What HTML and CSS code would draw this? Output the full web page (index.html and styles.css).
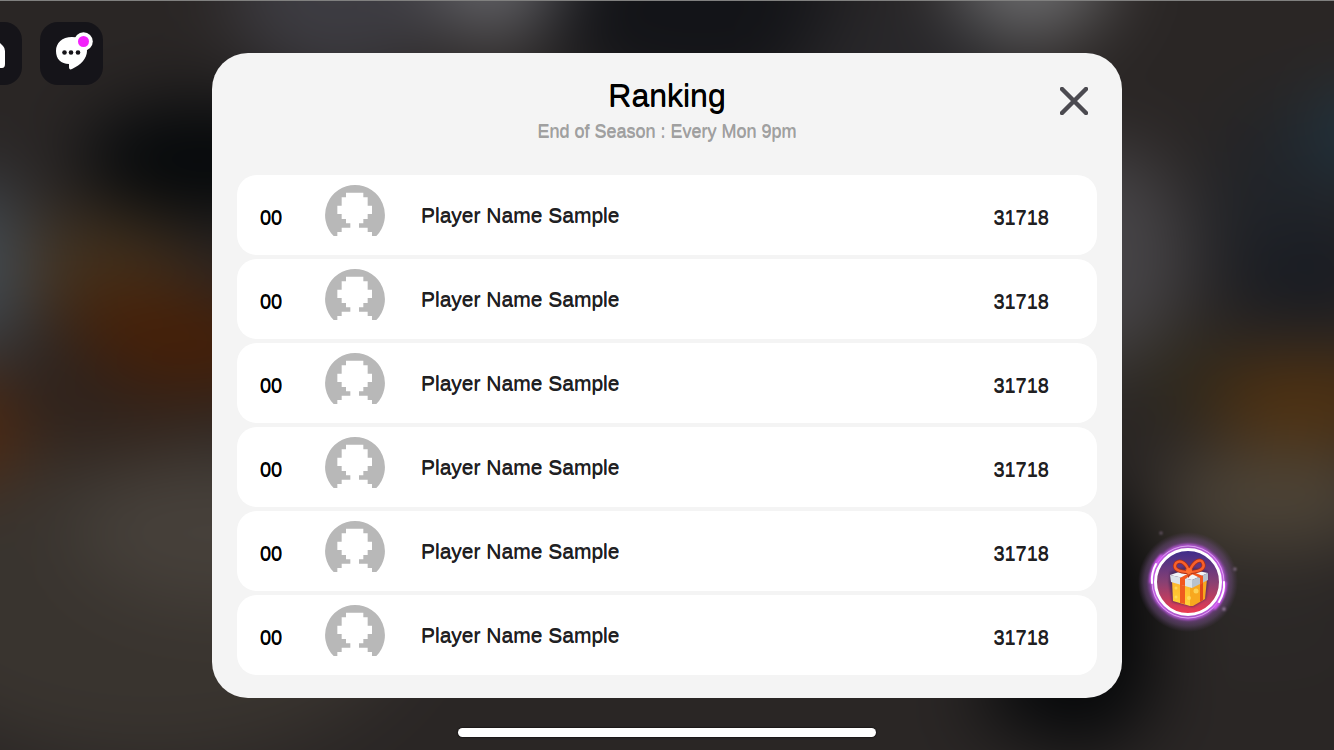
FILE: index.html
```html
<!DOCTYPE html>
<html lang="en">
<head>
<meta charset="utf-8">
<meta name="viewport" content="width=device-width, initial-scale=1">
<title>Ranking</title>
<link rel="stylesheet" href="styles.css">
</head>
<body>
<svg width="0" height="0" class="sprite" aria-hidden="true">
  <symbol id="avatar" viewBox="0 0 180 180">
    <path fill="#b8b8b8" d="M90 0a90 90 0 0 1 64 153h-13v-12h-13v-13h-26v-13h13v-13h13v-15h13V62h-13V37h-13V23H63v14H50v25H37v25h13v15h13v13h13v13H50v13H37v12H26A90 90 0 0 1 90 0z"/>
  </symbol>
</svg>
<div class="stage">
  <svg class="backdrop" viewBox="0 0 1334 750" preserveAspectRatio="none" aria-hidden="true">
    <filter id="blur" color-interpolation-filters="sRGB" filterUnits="userSpaceOnUse" x="-150" y="-150" width="1634" height="1050"><feGaussianBlur stdDeviation="36"/></filter>
    <g filter="url(#blur)">
      <rect x="-150" y="-150" width="1634" height="1050" fill="#2a2625"/>
      <ellipse cx="150" cy="600" rx="270" ry="160" fill="#39342f"/>
      <ellipse cx="225" cy="530" rx="150" ry="75" fill="#46403a"/>
      <ellipse cx="200" cy="160" rx="120" ry="60" fill="#06090b"/>
      <ellipse cx="90" cy="265" rx="100" ry="50" fill="#43321e"/>
      <ellipse cx="180" cy="338" rx="120" ry="48" fill="#471f06" transform="rotate(10 180 338)"/>
      <ellipse cx="90" cy="420" rx="130" ry="32" fill="#302119"/>
      <ellipse cx="-30" cy="265" rx="60" ry="90" fill="#424a52"/>
      <ellipse cx="-30" cy="430" rx="50" ry="60" fill="#522a10"/>
      <ellipse cx="340" cy="-10" rx="110" ry="90" fill="#3d3c42"/>
      <ellipse cx="495" cy="-40" rx="65" ry="80" fill="#646469"/>
      <ellipse cx="700" cy="10" rx="150" ry="90" fill="#131418"/>
      <ellipse cx="910" cy="50" rx="110" ry="60" fill="#28272a"/>
      <ellipse cx="1030" cy="-40" rx="80" ry="80" fill="#6c6c6e"/>
      <ellipse cx="1105" cy="255" rx="80" ry="110" fill="#464447"/>
      <ellipse cx="1290" cy="210" rx="80" ry="110" fill="#212429"/>
      <ellipse cx="1310" cy="280" rx="80" ry="45" fill="#181b22"/>
      <ellipse cx="1370" cy="130" rx="65" ry="40" fill="#203643"/>
      <ellipse cx="1190" cy="375" rx="60" ry="35" fill="#2d281a"/>
      <ellipse cx="1310" cy="400" rx="105" ry="46" fill="#50310f"/>
      <ellipse cx="1275" cy="498" rx="115" ry="50" fill="#4e4538"/>
      <ellipse cx="1260" cy="620" rx="100" ry="40" fill="#2c2927"/>
      <ellipse cx="1085" cy="620" rx="70" ry="130" fill="#050607"/>
      <ellipse cx="1065" cy="695" rx="90" ry="40" fill="#06080a"/>
    </g>
  </svg>

  <nav class="tools" aria-label="Game menu">
    <button class="tool" type="button" aria-label="Home">
      <svg viewBox="0 0 63 63" aria-hidden="true"><path fill="#fff" d="M31 11 44 24q2 2 2 5v13q0 4-3 4H18q-3 0-3-4V29q0-3 2-5z"/></svg>
    </button>
    <button class="tool" type="button" aria-label="Chat, new messages">
      <svg viewBox="0 0 63 63" aria-hidden="true">
        <path fill="#fff" d="M32 15C22 15 16 21 16 29c0 8 5 13 13 13l0 3c0 2 1 3 3 2 9-4 15-11 15-18 0-8-6-14-15-14z"/>
        <g fill="#151419"><circle cx="24.500" cy="30.500" r="2.300"/><circle cx="31" cy="30.500" r="2.300"/><circle cx="38" cy="30.500" r="2.300"/></g>
        <circle cx="43.500" cy="19.500" r="9.300" fill="#fff"/><circle cx="43.500" cy="19.500" r="5.500" fill="#f322fb"/>
      </svg>
    </button>
  </nav>

  <main class="panel" role="dialog" aria-labelledby="title">
    <header class="head">
      <h1 id="title" class="title">Ranking</h1>
      <p class="subtitle">End of Season : Every Mon 9pm</p>
      <button class="close" type="button" aria-label="Close">
        <svg viewBox="0 0 28 28" aria-hidden="true"><path d="M2 2 26 26M26 2 2 26" stroke="#4b4a50" stroke-width="4.500" stroke-linecap="round"/></svg>
      </button>
    </header>
    <ol class="list">
      <li class="row"><span class="num rank">00</span><svg class="avatar" aria-hidden="true"><use href="#avatar"/></svg><span class="name">Player Name Sample</span><span class="num score">31718</span></li>
      <li class="row"><span class="num rank">00</span><svg class="avatar" aria-hidden="true"><use href="#avatar"/></svg><span class="name">Player Name Sample</span><span class="num score">31718</span></li>
      <li class="row"><span class="num rank">00</span><svg class="avatar" aria-hidden="true"><use href="#avatar"/></svg><span class="name">Player Name Sample</span><span class="num score">31718</span></li>
      <li class="row"><span class="num rank">00</span><svg class="avatar" aria-hidden="true"><use href="#avatar"/></svg><span class="name">Player Name Sample</span><span class="num score">31718</span></li>
      <li class="row"><span class="num rank">00</span><svg class="avatar" aria-hidden="true"><use href="#avatar"/></svg><span class="name">Player Name Sample</span><span class="num score">31718</span></li>
      <li class="row"><span class="num rank">00</span><svg class="avatar" aria-hidden="true"><use href="#avatar"/></svg><span class="name">Player Name Sample</span><span class="num score">31718</span></li>
    </ol>
  </main>

  <aside class="side">
    <button class="gift" type="button" aria-label="Open gift">
      <svg viewBox="0 0 120 120" aria-hidden="true">
        <defs>
          <radialGradient id="halo">
            <stop offset=".66" stop-color="#a44fc0" stop-opacity=".85"/>
            <stop offset=".78" stop-color="#7d4a92" stop-opacity=".65"/>
            <stop offset=".88" stop-color="#684a76" stop-opacity=".5"/>
            <stop offset="1" stop-color="#5b4066" stop-opacity="0"/>
          </radialGradient>
          <linearGradient id="disc" x2="0" y2="1"><stop stop-color="#3b2d8c"/><stop offset=".5" stop-color="#884073"/><stop offset="1" stop-color="#f03a4e"/></linearGradient>
          <linearGradient id="box" x2="0" y2="1"><stop stop-color="#ffb52c"/><stop offset="1" stop-color="#ffd338"/></linearGradient>
          <filter id="soft" color-interpolation-filters="sRGB" x="-20%" y="-20%" width="140%" height="140%"><feGaussianBlur stdDeviation="1"/></filter>
        </defs>
        <circle cx="60" cy="60" r="50" fill="url(#halo)"/>
        <g fill="none" stroke="#c45ce6" filter="url(#soft)">
          <ellipse cx="60" cy="60" rx="35" ry="36" stroke-width="4"/>
          <ellipse cx="60" cy="60" rx="39" ry="36" stroke="#8b47ab" stroke-width="1"/>
        </g>
        <circle cx="60" cy="60" r="36" fill="none" stroke="#f0c4fc" stroke-opacity=".7"/>
        <path d="M23 61Q23 44 34 33M97 60Q97 76 86 87" fill="none" stroke="#d858f8" stroke-width="3" filter="url(#soft)"/>
        <path d="M24 61Q23 51 28 42M96 60Q97 70 91 80" fill="none" stroke="#fff" stroke-width="2" stroke-linecap="round"/>
        <circle cx="60" cy="60" r="32.500" fill="url(#disc)" stroke="#fff" stroke-width="3"/>
        <g filter="url(#soft)" fill="#b596bd"><circle cx="33" cy="11" r="1.500" opacity=".5"/><circle cx="107" cy="47" r="1.500" opacity=".7"/><circle cx="96" cy="87" r="1.500"/></g>
        <path d="M42 50 59 44 80 49 80 62 78 77 65 85 44 80 41 60z" fill="#33234d" opacity=".55" filter="url(#soft)"/>
        <path d="M44 58 62 62V84L45 79z" fill="url(#box)"/><path d="M62 63 79 57 77 77 65 84 62 84z" fill="#f8a81f"/>
        <g fill="#ffe36d" opacity=".7"><circle cx="48" cy="66" r="1.500"/><circle cx="61" cy="76" r="2"/><circle cx="68" cy="69" r="2.500"/><circle cx="48" cy="75" r="1.500"/></g>
        <path d="M52 60 57 61V82L52 81z" fill="#ef5c1e"/><path d="M72 60 75 58V78L72 80z" fill="#e2481a"/>
        <path d="M42 53 60 47 80 51 64 58z" fill="#f1f4f7"/><path d="M42 53 64 58V66L43 60z" fill="#dce3e9"/><path d="M64 58 80 51V58L64 66z" fill="#b7c2ce"/>
        <path d="M52 56 61 51 65 52 57 57V64L52 63zM62 51 65 50 75 54V61L72 63V56z" fill="#f2571e"/>
        <path d="M61 50C51 50 44 47 48 41 53 37 59 42 61 50C66 38 73 36 75 41 78 47 70 50 61 50z" fill="none" stroke="#a8301a" stroke-width="4"/>
        <path d="M61 50C51 50 44 47 48 41 53 37 59 42 61 50C66 38 73 36 75 41 78 47 70 50 61 50z" fill="none" stroke="#f9602a" stroke-width="2.500"/>
        <circle cx="61" cy="49" r="3" fill="#ff702d"/>
      </svg>
    </button>
  </aside>
  <div class="home-bar"></div>
</div>
</body>
</html>
```
FILE: styles.css
```css
* {
  box-sizing: border-box;
}

body {
  margin: 0;
  font-family: "Liberation Sans", Arial, sans-serif;
  background: #2c2827;
}

button {
  padding: 0;
  border: 0;
  background: none;
  cursor: pointer;
}

svg {
  display: block;
}

.sprite {
  position: absolute;
}

.stage {
  position: relative;
  isolation: isolate;
  display: grid;
  grid-template-columns: 212px minmax(0, 1fr) 212px;
  grid-template-rows: auto 1fr;
  min-height: 100vh;
  padding-top: 21px;
  overflow: hidden;
  border-top: 1px solid #80807f;
}

.backdrop {
  position: absolute;
  inset: 0;
  z-index: -1;
  width: 100%;
  height: 100%;
}

.tools {
  display: flex;
  align-items: flex-start;
  gap: 18px;
  margin-left: -41px;
}

.tool {
  width: 63px;
  height: 63px;
  border-radius: 18px;
  background: #151419;
}

.panel {
  margin-top: 31px;
  padding: 0 25px 23px;
  border-radius: 36px;
  background: #f4f4f4;
}

.head {
  position: relative;
  height: 122px;
  padding-top: 24px;
  text-align: center;
}

.title,
.subtitle,
.num,
.name {
  margin: 0;
  font-weight: 400;
  text-shadow: 0 1px 0 currentColor;
}

.title {
  font-size: 32px;
  line-height: 36px;
  color: #000;
}

.subtitle {
  margin-top: 8px;
  font-size: 18px;
  line-height: 20px;
  color: #a0a0a0;
}

.close {
  position: absolute;
  top: 34px;
  right: 9px;
  width: 28px;
  height: 28px;
}

.list {
  display: grid;
  gap: 4px;
  margin: 0;
  padding: 0;
  list-style: none;
}

.row {
  display: grid;
  grid-template-columns: 65px 60px 1fr auto;
  align-items: center;
  min-height: 80px;
  padding: 0 48px 0 23px;
  border-radius: 20px;
  background: #fff;
  line-height: 24px;
  color: #202022;
}

.avatar {
  width: 60px;
  height: 60px;
}

.name {
  padding: 0 0 1px 36px;
  font-size: 21px;
}

.num {
  padding-top: 4px;
  font-size: 20px;
}

.rank {
  color: #000;
}

.side {
  padding: 500px 0 0 6px;
}

.gift {
  display: block;
  width: 120px;
  height: 120px;
}

.home-bar {
  grid-column: 1 / -1;
  justify-self: center;
  align-self: start;
  width: 418px;
  max-width: 60%;
  height: 9px;
  margin: 30px 0 12px;
  border-radius: 5px;
  background: #fff;
  box-shadow: 0 0 1px 1px #1c1919;
}
```
